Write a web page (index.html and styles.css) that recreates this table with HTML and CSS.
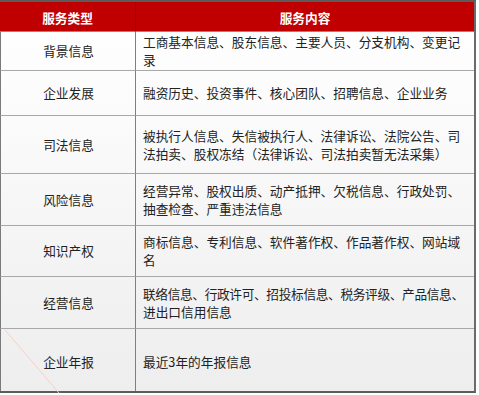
FILE: index.html
```html
<!DOCTYPE html>
<html lang="zh-CN">
<head>
<meta charset="utf-8">
<title>服务类型</title>
<link rel="stylesheet" href="styles.css">
</head>
<body>
<div class="table">
  <div class="hcell">服务类型</div>
  <div class="hcell hcell-last">服务内容</div>

  <div class="cell type r1">背景信息</div>
  <div class="cell desc r1"><div class="txt">工商基本信息、股东信息、主要人员、分支机构、变更记<br>录</div></div>

  <div class="cell type r2">企业发展</div>
  <div class="cell desc r2"><div class="txt">融资历史、投资事件、核心团队、招聘信息、企业业务</div></div>

  <div class="cell type r3">司法信息</div>
  <div class="cell desc r3"><div class="txt">被执行人信息、失信被执行人、法律诉讼、法院公告、司<br>法拍卖、股权冻结（法律诉讼、司法拍卖暂无法采集）</div></div>

  <div class="cell type r4">风险信息</div>
  <div class="cell desc r4"><div class="txt">经营异常、股权出质、动产抵押、欠税信息、行政处罚、<br>抽查检查、严重违法信息</div></div>

  <div class="cell type r5">知识产权</div>
  <div class="cell desc r5"><div class="txt">商标信息、专利信息、软件著作权、作品著作权、网站域<br>名</div></div>

  <div class="cell type r6">经营信息</div>
  <div class="cell desc r6"><div class="txt"><span class="tight">联络信息、行政许可、招投标信息、税务评级、产品信息、</span><br>进出口信用信息</div></div>

  <div class="cell type r7 last">企业年报
    <svg class="scratch" width="60" height="64" viewBox="0 0 60 64"><line x1="4" y1="1" x2="58" y2="64" stroke="#f6cfc6" stroke-width="1"/></svg>
  </div>
  <div class="cell desc r7 last"><div class="txt">最近3年的年报信息</div></div>
</div>
</body>
</html>
```
FILE: styles.css
```css
html, body {
  margin: 0;
  padding: 0;
  background: #ffffff;
}

body {
  width: 479px;
  height: 395px;
  overflow: hidden;
  font-family: "Noto Sans CJK SC", "Microsoft YaHei", sans-serif;
  font-size: 12.7px;
  color: #222222;
}

.table {
  width: 476px;
  box-sizing: border-box;
  border-top: 2px solid #5c5c5c;
  border-right: 2px solid #6b6b6b;
  border-bottom: 2px solid #5c5c5c;
  background: linear-gradient(to bottom, #ffffff 0%, #fbfbfb 30%, #f1f1f1 80%, #eeeeee 100%);
  display: grid;
  grid-template-columns: 136px 338px;
  grid-template-rows: 30px 39px 45px 58px 52px 51px 52px 62px;
}

.hcell {
  background: #c00000;
  color: #ffffff;
  font-weight: bold;
  display: flex;
  align-items: center;
  justify-content: center;
  border-bottom: 1px solid #8a8a8a;
  border-right: 1px solid #7a1010;
  box-sizing: border-box;
  padding-top: 1px;
}

.hcell-last {
  border-right: none;
}

.cell {
  box-sizing: border-box;
  border-bottom: 1px solid #a8a8a8;
  display: flex;
  align-items: center;
  line-height: 17.7px;
  position: relative;
}

.cell.last {
  border-bottom: none;
}

.type {
  justify-content: center;
  border-right: 1px solid #7f7f7f;
  border-left: 1px solid #7a7a7a;
  padding-left: 1px;
}

.desc {
  padding: 0 4px 0 7px;
}

.txt {
  white-space: nowrap;
}

.tight {
  letter-spacing: -0.35px;
}

.r7 {
  padding-top: 3px;
}

.scratch {
  position: absolute;
  left: 0;
  top: 0;
}
```
